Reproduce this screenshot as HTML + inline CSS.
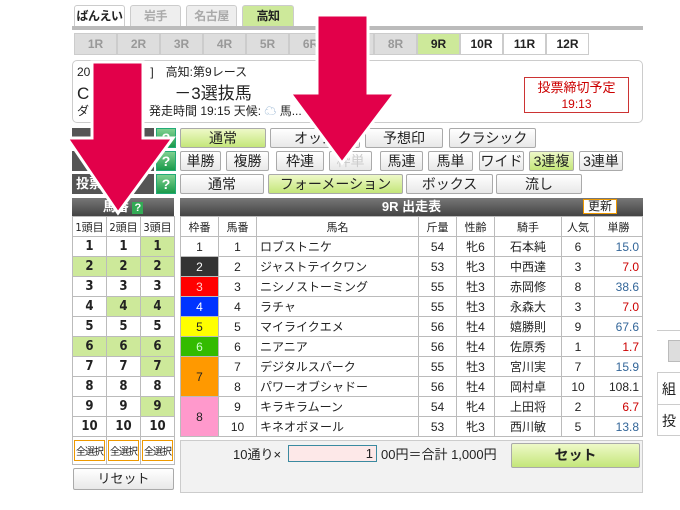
<!DOCTYPE html>
<html><head><meta charset="utf-8"><style>
*{margin:0;padding:0;box-sizing:border-box}
body{width:680px;height:510px;background:#fff;position:relative;overflow:hidden;font-family:"Liberation Sans","Noto Sans CJK JP",sans-serif;font-size:12px;color:#222}
.a{position:absolute}
.tab{position:absolute;top:5px;height:22px;border:1px solid #ccc;border-bottom:none;border-radius:3px 3px 0 0;background:#eee;color:#aaa;font-weight:bold;font-size:12px;text-align:center;line-height:21px;white-space:nowrap;letter-spacing:-0.5px}
.r{position:absolute;top:33px;height:22px;width:43px;border:1px solid #ccc;text-align:center;line-height:20px;font-weight:bold;font-size:12px;color:#999;background:#ddd}
.b{position:absolute;height:20px;border:1px solid #aaa;border-radius:2px;background:linear-gradient(#fff,#e8e8e8);text-align:center;line-height:18px;font-size:14px;color:#222}
.g{background:linear-gradient(#eef9c8,#c4e67a)}
.q{position:absolute;left:156px;width:20px;height:20px;background:linear-gradient(#7fd08f,#1a9a4a);border:1px solid #2a7;color:#fff;font-weight:bold;text-align:center;line-height:18px;font-size:14px}
.lbl{position:absolute;left:72px;width:82px;height:20px;background:#555;color:#fff;font-weight:bold;font-size:13px;line-height:20px;padding-left:4px}
table{border-collapse:collapse;position:absolute;table-layout:fixed}
td{border:1px solid #bbb;height:20px;text-align:center;padding:0;font-size:12px;white-space:nowrap;overflow:hidden}
.lp td{width:34px;font-weight:bold;font-size:13px;font-family:"DejaVu Sans Condensed","Liberation Sans",sans-serif}
.lp td.y{background:#cde99a}
.sa{border:1px solid #e90;display:inline-block;padding:2px 0;width:31px;font-size:10px;letter-spacing:-1px;font-weight:normal;font-family:"Liberation Sans","Noto Sans CJK JP",sans-serif}
.mt td.n{text-align:left;padding-left:3px}
.mt td.o{text-align:right;padding-right:3px;color:#336699}
.mt td.o.red{color:#c00}
.hd{position:absolute;top:198px;height:18px;background:linear-gradient(#777,#444);color:#fff;font-weight:bold;font-size:13px;line-height:18px}
</style></head><body>
<div class="tab" style="left:74px;width:51px;background:#fff;color:#222">ばんえい</div>
<div class="tab" style="left:130px;width:51px">岩手</div>
<div class="tab" style="left:186px;width:51px">名古屋</div>
<div class="tab" style="left:242px;width:52px;background:#cde99a;color:#222">高知</div>
<div class="a" style="left:72px;top:26px;width:571px;height:4px;background:#bbb"></div>
<div class="r" style="left:74px">1R</div><div class="r" style="left:117px">2R</div><div class="r" style="left:160px">3R</div><div class="r" style="left:203px">4R</div><div class="r" style="left:246px">5R</div><div class="r" style="left:289px">6R</div><div class="r" style="left:331px">7R</div><div class="r" style="left:374px">8R</div>
<div class="r" style="left:417px;background:#cde99a;color:#222">9R</div>
<div class="r" style="left:460px;background:#fff;color:#222">10R</div><div class="r" style="left:503px;background:#fff;color:#222">11R</div><div class="r" style="left:546px;background:#fff;color:#222">12R</div>
<div class="a" style="left:72px;top:60px;width:571px;height:63px;border:1px solid #ccc;border-radius:5px"></div>
<div class="a" style="left:77px;top:63px;font-size:12px">20　　　　　]　高知:第9レース</div>
<div class="a" style="left:77px;top:79px;font-size:17px">C　　　　　－3選抜馬</div>
<div class="a" style="left:77px;top:102px;font-size:12px">ダ　　　　　発走時間 19:15 天候: <span style="color:#8ac">☁</span> 馬...</div>
<div class="a" style="left:524px;top:77px;width:105px;height:36px;border:1px solid #c33;color:#c00;text-align:center;font-size:13px;line-height:16px;padding-top:2px">投票締切予定<br><span style="font-size:12px">19:13</span></div>
<div class="lbl" style="top:128px"></div><div class="lbl" style="top:151px"></div><div class="lbl" style="top:174px">投票</div>
<div class="q" style="top:128px">?</div><div class="q" style="top:151px">?</div><div class="q" style="top:174px">?</div>
<div class="b g" style="left:180px;top:128px;width:86px">通常</div>
<div class="b" style="left:270px;top:128px;width:90px">オッズ</div>
<div class="b" style="left:365px;top:128px;width:78px">予想印</div>
<div class="b" style="left:449px;top:128px;width:87px">クラシック</div>
<div class="b" style="left:180px;top:151px;width:41px">単勝</div>
<div class="b" style="left:226px;top:151px;width:43px">複勝</div>
<div class="b" style="left:276px;top:151px;width:48px">枠連</div>
<div class="b" style="left:329px;top:151px;width:43px;color:#ccc">枠単</div>
<div class="b" style="left:380px;top:151px;width:43px">馬連</div>
<div class="b" style="left:428px;top:151px;width:45px">馬単</div>
<div class="b" style="left:479px;top:151px;width:45px">ワイド</div>
<div class="b g" style="left:529px;top:151px;width:45px">3連複</div>
<div class="b" style="left:579px;top:151px;width:44px">3連単</div>
<div class="b" style="left:180px;top:174px;width:84px">通常</div>
<div class="b g" style="left:268px;top:174px;width:135px">フォーメーション</div>
<div class="b" style="left:406px;top:174px;width:87px">ボックス</div>
<div class="b" style="left:496px;top:174px;width:86px">流し</div>
<div class="hd" style="left:72px;width:102px;text-align:center">馬番 <span style="background:#3a5;padding:0 2px;font-size:11px">?</span></div>
<table class="lp" style="left:72px;top:216px;width:102px">
<tr><td style="font-weight:normal;font-size:11px;height:16px">1頭目</td><td style="font-weight:normal;font-size:11px">2頭目</td><td style="font-weight:normal;font-size:11px">3頭目</td></tr>
<tr><td>1</td><td>1</td><td class="y">1</td></tr>
<tr><td class="y">2</td><td class="y">2</td><td class="y">2</td></tr>
<tr><td>3</td><td>3</td><td>3</td></tr>
<tr><td>4</td><td class="y">4</td><td class="y">4</td></tr>
<tr><td>5</td><td>5</td><td>5</td></tr>
<tr><td class="y">6</td><td class="y">6</td><td class="y">6</td></tr>
<tr><td>7</td><td>7</td><td class="y">7</td></tr>
<tr><td>8</td><td>8</td><td>8</td></tr>
<tr><td>9</td><td>9</td><td class="y">9</td></tr>
<tr><td>10</td><td>10</td><td>10</td></tr>
<tr><td style="height:28px"><span class="sa">全選択</span></td><td><span class="sa">全選択</span></td><td><span class="sa">全選択</span></td></tr>
</table>
<div class="b" style="left:73px;top:468px;width:101px;height:22px;font-size:13px;line-height:20px">リセット</div>
<div class="hd" style="left:180px;width:463px;text-align:center">9R 出走表</div>
<div class="a" style="left:583px;top:199px;width:34px;height:15px;background:#fff;border:1px solid #e90;font-size:12px;text-align:center;line-height:13px">更新</div>
<table class="mt" style="left:180px;top:216px;width:463px">
<tr><td style="width:38px;height:16px;font-size:11px">枠番</td><td style="width:38px;font-size:11px">馬番</td><td style="width:162px;font-size:11px">馬名</td><td style="width:38px;font-size:11px">斤量</td><td style="width:38px;font-size:11px">性齢</td><td style="width:67px;font-size:11px">騎手</td><td style="width:33px;font-size:11px">人気</td><td style="font-size:11px">単勝</td></tr>
<tr><td>1</td><td>1</td><td class="n">ロブストニケ</td><td>54</td><td>牝6</td><td>石本純</td><td>6</td><td class="o">15.0</td></tr>
<tr><td style="background:#333;color:#fff">2</td><td>2</td><td class="n">ジャストテイクワン</td><td>53</td><td>牝3</td><td>中西達</td><td>3</td><td class="o red">7.0</td></tr>
<tr><td style="background:#f00;color:#fcc">3</td><td>3</td><td class="n">ニシノストーミング</td><td>55</td><td>牡3</td><td>赤岡修</td><td>8</td><td class="o">38.6</td></tr>
<tr><td style="background:#03f;color:#fff">4</td><td>4</td><td class="n">ラチャ</td><td>55</td><td>牡3</td><td>永森大</td><td>3</td><td class="o red">7.0</td></tr>
<tr><td style="background:#ff0">5</td><td>5</td><td class="n">マイライクエメ</td><td>56</td><td>牡4</td><td>嬉勝則</td><td>9</td><td class="o">67.6</td></tr>
<tr><td style="background:#3b0;color:#cfc">6</td><td>6</td><td class="n">ニアニア</td><td>56</td><td>牡4</td><td>佐原秀</td><td>1</td><td class="o red">1.7</td></tr>
<tr><td rowspan="2" style="background:#f90">7</td><td>7</td><td class="n">デジタルスパーク</td><td>55</td><td>牡3</td><td>宮川実</td><td>7</td><td class="o">15.9</td></tr>
<tr><td>8</td><td class="n">パワーオブシャドー</td><td>56</td><td>牡4</td><td>岡村卓</td><td>10</td><td class="o" style="color:#222">108.1</td></tr>
<tr><td rowspan="2" style="background:#f9c">8</td><td>9</td><td class="n">キラキラムーン</td><td>54</td><td>牝4</td><td>上田将</td><td>2</td><td class="o red">6.7</td></tr>
<tr><td>10</td><td class="n">キネオボヌール</td><td>53</td><td>牝3</td><td>西川敏</td><td>5</td><td class="o">13.8</td></tr>
</table>
<div class="a" style="left:180px;top:440px;width:463px;height:53px;background:#f2f2f2;border:1px solid #ccc"></div>
<div class="a" style="left:233px;top:444px;font-size:13px">10通り×</div>
<div class="a" style="left:288px;top:445px;width:89px;height:17px;background:#fde8e8;border:1px solid #3a8aa0;text-align:right;padding-right:3px;font-size:13px;line-height:15px">1</div>
<div class="a" style="left:381px;top:444px;font-size:13px">00円＝合計 1,000円</div>
<div class="b g" style="left:511px;top:443px;width:129px;height:25px;font-weight:bold;line-height:23px;font-size:14px">セット</div>
<div class="a" style="left:657px;top:330px;width:23px;height:1px;background:#ccc"></div>
<div class="a" style="left:668px;top:340px;width:14px;height:22px;background:#ddd;border:1px solid #bbb"></div>
<div class="a" style="left:657px;top:372px;width:25px;height:64px;border:1px solid #ccc;font-size:14px;padding-left:4px;line-height:32px">組<br>投</div>
<div class="a" style="left:657px;top:404px;width:23px;height:1px;background:#ccc"></div>
<svg class="a" style="left:0;top:0" width="680" height="510">
<polygon points="92,62 143,62 143,138 173,138 118,213 67,138 92,138" fill="#e2004a" stroke="#fff" stroke-width="3" stroke-linejoin="miter"/>
<polygon points="317,15 368,15 368,93 395,93 342,163 290,93 317,93" fill="#e2004a" stroke="#fff" stroke-width="3"/>
</svg>
</body></html>
